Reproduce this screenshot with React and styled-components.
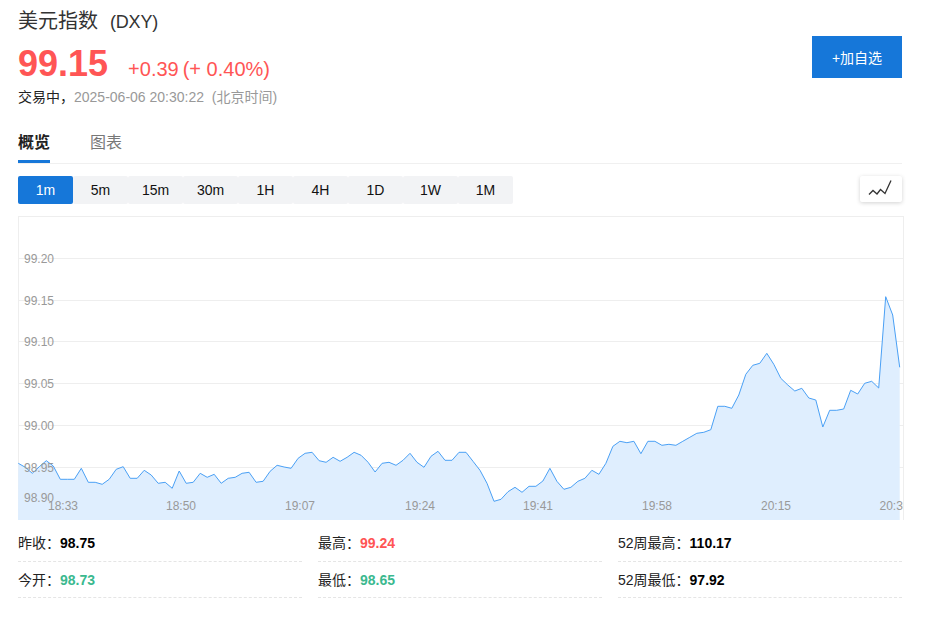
import styled, { createGlobalStyle } from "styled-components";

const GlobalStyle = createGlobalStyle`
  html, body {
    margin: 0;
    padding: 0;
    background: #fff;
    font-family: "Liberation Sans", "Noto Sans CJK SC", sans-serif;
  }
`;

const ranges = ["1m", "5m", "15m", "30m", "1H", "4H", "1D", "1W", "1M"];

const stats = [
  { label: "昨收：", value: "98.75" },
  { label: "最高：", value: "99.24", tone: "up" },
  { label: "52周最高：", value: "110.17" },
  { label: "今开：", value: "98.73", tone: "down" },
  { label: "最低：", value: "98.65", tone: "down" },
  { label: "52周最低：", value: "97.92" },
];

// y position of the price line, one point per minute
const line = [
  463.3, 467.3, 473.3, 466.7, 460.7, 466, 479.3, 479.3, 479.3, 468.3, 482.3, 482.3, 484.3, 479.3, 469.3,
  466.7, 478.3, 478.3, 470.3, 475, 483.3, 482.3, 488.3, 471, 483.3, 482.3, 473.3, 477.3, 474.3, 483.3,
  478.3, 477.3, 473.3, 472.3, 482.3, 481.3, 471.3, 465.3, 467, 468.3, 458.3, 453.3, 452.3, 460.7,
  462.3, 457.3, 461.3, 457.3, 452.3, 455.3, 462.3, 472, 463.3, 462.3, 465.3, 460.3, 453.3, 462.3, 467.3,
  456.3, 451.3, 460.3, 460.3, 452.3, 452.3, 461.3, 470.3, 483.3, 501.3, 499.3, 491.7, 487.3, 492.3, 486.3,
  486.3, 481, 468.3, 481.3, 489.3, 487.3, 481.3, 478.3, 470.3, 474.3, 463.3, 446.3, 441.3, 442.7, 441.3,
  453.7, 441.3, 441.3, 445.3, 444.3, 445.3, 441.3, 437.3, 433.3, 432.3, 429.7, 406.3, 406.3, 408.3,
  395, 374.3, 365.3, 363.3, 353.3, 364.3, 378.3, 385, 391, 388.3, 398, 400, 427, 410.3, 410.3, 409,
  390.3, 394, 383.3, 381.3, 388, 296.7, 315, 367.3,
];

const CHART_TOP = 216;
const STEP = 881.4 / (line.length - 1);

const points = line.map((y, i) => [(0.3 + i * STEP).toFixed(1), (y - CHART_TOP).toFixed(1)]);
const linePath = points.map(([x, y], i) => `${i ? "L" : "M"}${x} ${y}`).join(" ");
const areaPath = `${linePath} L${points[points.length - 1][0]} 304 L0 304 Z`;

const gridLines = [42.5, 84.5, 125.5, 167.5, 209.5, 251.5];
const priceLabels = [
  ["99.20", 47],
  ["99.15", 89],
  ["99.10", 130],
  ["99.05", 172],
  ["99.00", 214],
  ["98.95", 256],
  ["98.90", 286],
];
const timeLabels = [
  ["18:33", 45],
  ["18:50", 163],
  ["19:07", 282],
  ["19:24", 402],
  ["19:41", 520],
  ["19:58", 639],
  ["20:15", 758],
  ["20:30", 876.5],
];

const App = () => {
  return (
    <Page>
      <GlobalStyle />
      <Header>
        <div>
          <Title>
            美元指数<TitleCode>(DXY)</TitleCode>
          </Title>
          <PriceRow>
            <Price>99.15</Price>
            <Change>+0.39</Change>
            <Change>(+ 0.40%)</Change>
          </PriceRow>
          <Status>
            交易中，<Muted>2025-06-06 20:30:22 &nbsp;(北京时间)</Muted>
          </Status>
        </div>
        <AddButton>+加自选</AddButton>
      </Header>

      <Tabs>
        <Tab $active>概览</Tab>
        <Tab>图表</Tab>
      </Tabs>

      <Toolbar>
        <Ranges>
          {ranges.map((r, i) => (
            <RangeButton key={r} $active={i === 0}>
              {r}
            </RangeButton>
          ))}
        </Ranges>
        <ChartType>
          <svg width="42" height="26" viewBox="0 0 42 26" fill="none">
            <path d="M9 18.5 L13 14.5 L17 18 L20.5 13.5 L25 17.5 L31 4.5" stroke="#333" strokeWidth="1.3" />
          </svg>
        </ChartType>
      </Toolbar>

      <ChartBox>
        <svg width="885" height="304" viewBox="0 0 885 304">
          {gridLines.map((y) => (
            <line key={y} x1="0" x2="885" y1={y} y2={y} stroke="#eeeeee" />
          ))}
          <path d={areaPath} fill="#dfeefe" />
          <path d={linePath} fill="none" stroke="#4aa0f5" strokeWidth="1" />
          {priceLabels.map(([t, y]) => (
            <AxisText key={t} x="6" y={y}>
              {t}
            </AxisText>
          ))}
          {timeLabels.map(([t, x]) => (
            <AxisText key={t} x={x} y="293.5" textAnchor="middle">
              {t}
            </AxisText>
          ))}
        </svg>
      </ChartBox>

      <Stats>
        {stats.map((s) => (
          <StatItem key={s.label}>
            {s.label}
            <StatValue $tone={s.tone}>{s.value}</StatValue>
          </StatItem>
        ))}
      </Stats>
    </Page>
  );
};

export default App;

const Page = styled.div`
  width: 884px;
  padding: 7px 0 0 18px;
  color: #222;
`;

const Header = styled.div`
  display: flex;
  justify-content: space-between;
  align-items: flex-start;
`;

const Title = styled.div`
  font-size: 20px;
  line-height: 28px;
  color: #333;
`;

const TitleCode = styled.span`
  font-size: 18px;
  letter-spacing: -0.2px;
  margin-left: 12px;
`;

const PriceRow = styled.div`
  display: flex;
  align-items: baseline;
  margin-top: 7px;
  height: 41px;
  line-height: 41px;
  color: #ff5555;
`;

const Price = styled.span`
  font-size: 36px;
  font-weight: 700;
  margin-right: 20px;
`;

const Change = styled.span`
  font-size: 20px;
  margin-right: 4px;
`;

const Status = styled.div`
  font-size: 14px;
  line-height: 20px;
  margin-top: 3px;
  color: #222;
`;

const Muted = styled.span`
  color: #999;
`;

const AddButton = styled.button`
  width: 90px;
  height: 42px;
  margin-top: 29px;
  border: 0;
  padding: 0;
  background: #1677d9;
  color: #fff;
  font: inherit;
  font-size: 14px;
`;

const Tabs = styled.div`
  display: flex;
  gap: 40px;
  margin-top: 16px;
  height: 40px;
  border-bottom: 1px solid #f0f0f0;
`;

const Tab = styled.div`
  height: 37px;
  line-height: 39px;
  font-size: 16px;
  color: ${(p) => (p.$active ? "#222" : "#777")};
  font-weight: ${(p) => (p.$active ? 700 : 400)};
  border-bottom: ${(p) => (p.$active ? "3px solid #1677d9" : "0")};
`;

const Toolbar = styled.div`
  display: flex;
  justify-content: space-between;
  align-items: flex-start;
  margin-top: 12px;
`;

const Ranges = styled.div`
  display: flex;
`;

const RangeButton = styled.div`
  width: 55px;
  height: 28px;
  line-height: 28px;
  text-align: center;
  font-size: 14px;
  border-radius: 2px;
  color: ${(p) => (p.$active ? "#fff" : "#111")};
  background: ${(p) => (p.$active ? "#1677d9" : "#f2f3f5")};
`;

const ChartType = styled.div`
  width: 42px;
  height: 26px;
  border-radius: 2px;
  background: #fff;
  box-shadow: 0 1px 4px rgba(0, 0, 0, 0.18);

  svg {
    display: block;
  }
`;

const ChartBox = styled.div`
  width: 886px;
  height: 304px;
  margin-top: 12px;
  box-shadow: inset 1px 1px 0 #eeeeee, inset -1px 0 0 #eeeeee;
  overflow: hidden;

  svg {
    display: block;
  }
`;

const AxisText = styled.text`
  font-family: "Liberation Sans", sans-serif;
  font-size: 12px;
  fill: #999;
`;

const Stats = styled.div`
  display: grid;
  grid-template-columns: repeat(3, 284px);
  column-gap: 16px;
`;

const StatItem = styled.div`
  height: 36px;
  box-sizing: border-box;
  line-height: 36px;
  font-size: 14px;
  color: #222;
  border-bottom: 1px dashed #e5e5e5;

  &:nth-child(-n + 3) {
    height: 42px;
    line-height: 46px;
  }
`;

const StatValue = styled.span`
  font-weight: 700;
  color: ${(p) => (p.$tone === "up" ? "#ff5555" : p.$tone === "down" ? "#3bb98f" : "#000")};
`;
